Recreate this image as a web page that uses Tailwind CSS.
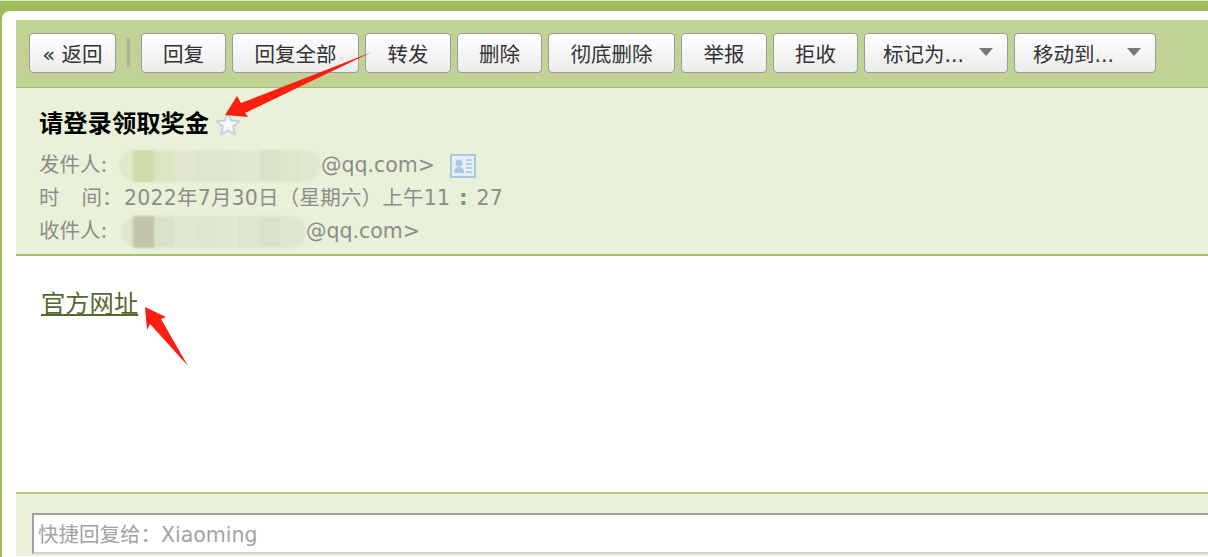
<!DOCTYPE html>
<html lang="zh-CN">
<head>
  <meta charset="UTF-8" />
  <title>请登录领取奖金</title>
  <script src="https://cdn.jsdelivr.net/npm/@tailwindcss/browser@4"></script>
</head>
<body class="relative h-[557px] w-[1208px] overflow-hidden bg-[#9dbc5b] font-['DejaVu_Sans','Noto_Sans_CJK_SC',sans-serif]">
  <div class="h-px bg-[#dfe8c8]"></div>

  <!-- Card -->
  <div class="ml-[2px] mt-[10px] h-[546px] rounded-tl-lg bg-white pl-[14px] pt-[9px]">

    <!-- Toolbar -->
    <div class="flex h-[68px] items-center border-b border-[#9fb96a] bg-[#c0d294] pb-[2px] pl-[13px]">
      <button class="h-[40px] w-[87px] rounded border border-[#9a9a9a] bg-gradient-to-b from-white to-[#ebebeb] pt-[6px] text-[20.5px] text-[#333]">« 返回</button>
      <div class="mx-[11px] h-[29px] w-[3px] bg-[#a9b59a]"></div>
      <div class="flex gap-[6px]">
        <button class="h-[40px] w-[85px] rounded border border-[#9a9a9a] bg-gradient-to-b from-white to-[#ebebeb] pt-[6px] text-[20.5px] text-[#333]">回复</button>
        <button class="h-[40px] w-[127px] rounded border border-[#9a9a9a] bg-gradient-to-b from-white to-[#ebebeb] pt-[6px] text-[20.5px] text-[#333]">回复全部</button>
        <button class="h-[40px] w-[86px] rounded border border-[#9a9a9a] bg-gradient-to-b from-white to-[#ebebeb] pt-[6px] text-[20.5px] text-[#333]">转发</button>
        <button class="h-[40px] w-[85px] rounded border border-[#9a9a9a] bg-gradient-to-b from-white to-[#ebebeb] pt-[6px] text-[20.5px] text-[#333]">删除</button>
        <button class="h-[40px] w-[127px] rounded border border-[#9a9a9a] bg-gradient-to-b from-white to-[#ebebeb] pt-[6px] text-[20.5px] text-[#333]">彻底删除</button>
        <button class="h-[40px] w-[86px] rounded border border-[#9a9a9a] bg-gradient-to-b from-white to-[#ebebeb] pt-[6px] text-[20.5px] text-[#333]">举报</button>
        <button class="h-[40px] w-[85px] rounded border border-[#9a9a9a] bg-gradient-to-b from-white to-[#ebebeb] pt-[6px] text-[20.5px] text-[#333]">拒收</button>
        <button class="flex h-[40px] w-[144px] items-center justify-between rounded border border-[#9a9a9a] bg-gradient-to-b from-white to-[#ebebeb] pl-[18px] pr-[14px] pt-[6px] text-[20.5px] text-[#333]">标记为...<span class="mb-[7px] h-0 w-0 border-x-[7px] border-t-[8px] border-x-transparent border-t-[#777]"></span></button>
        <button class="flex h-[40px] w-[142px] items-center justify-between rounded border border-[#9a9a9a] bg-gradient-to-b from-white to-[#ebebeb] pl-[18px] pr-[14px] pt-[6px] text-[20.5px] text-[#333]">移动到...<span class="mb-[7px] h-0 w-0 border-x-[7px] border-t-[8px] border-x-transparent border-t-[#777]"></span></button>
      </div>
    </div>

    <!-- Mail header -->
    <div class="h-[168px] border-b-2 border-[#a5bd6e] bg-[#e9f2d8] pl-[23px] pt-[20px] text-[20.5px] text-[#8c8c8c]">
      <div class="flex h-[32px] items-center">
        <h1 class="text-[24.3px] font-bold leading-none text-black">请登录领取奖金</h1>
        <svg class="ml-[6px]" width="26" height="26" viewBox="0 0 26 26"><path d="M13 2l3.3 7.4 8 .8-6 5.4 1.7 7.9-7-4-7 4 1.7-7.9-6-5.4 8-.8z" fill="#f6f7f6" stroke="#c8cedd" stroke-width="2" stroke-linejoin="round"/></svg>
      </div>
      <div class="mt-[9px] flex h-[33px] items-center">
        <span class="w-[80px]">发件人:</span>
        <span class="flex h-[32px] w-[202px] overflow-hidden rounded-[16px] blur-[1px]">
          <i class="w-[14px] bg-[#dfe8c9]"></i><i class="w-[21px] bg-[#cddcaa]"></i><i class="w-[21px] bg-[#dae6c2]"></i><i class="w-[21px] bg-[#e1e8cf]"></i><i class="w-[21px] bg-[#dde7cd]"></i><i class="w-[21px] bg-[#dfe7cf]"></i><i class="w-[21px] bg-[#e2e9d2]"></i><i class="w-[21px] bg-[#d9e2c9]"></i><i class="w-[21px] bg-[#dde6cb]"></i><i class="w-[20px] bg-[#e0e8cf]"></i>
        </span>
        <span>@qq.com&gt;</span>
        <svg class="ml-[15px]" width="26" height="24" viewBox="0 0 26 24"><rect x="1" y="1" width="24" height="22" fill="#e6eff5" stroke="#a9c8e4" stroke-width="2"/><circle cx="9" cy="9" r="3.5" fill="#a9c8e4"/><path d="M4 19c0-4 2-6 5-6s5 2 5 6z" fill="#a9c8e4"/><path d="M16 6h6M16 10h6M16 14h6M16 18h6" stroke="#a9c8e4" stroke-width="1.5"/></svg>
      </div>
      <div class="flex h-[33px] items-center">
        <span class="w-[85px]">时<span class="ml-[22px]">间：</span></span>
        <span class="tracking-[0.2px]">2022年7月30日（星期六）上午11<span class="mx-[9px] font-bold">:</span>27</span>
      </div>
      <div class="flex h-[33px] items-center">
        <span class="w-[82px]">收件人:</span>
        <span class="flex h-[32px] w-[185px] overflow-hidden rounded-[16px] blur-[1px]">
          <i class="w-[12px] bg-[#e0e6d0]"></i><i class="w-[21px] bg-[#c3c3ab]"></i><i class="w-[21px] bg-[#d9e2c9]"></i><i class="w-[21px] bg-[#e0e8cf]"></i><i class="w-[21px] bg-[#dfe6d0]"></i><i class="w-[21px] bg-[#e2e9d2]"></i><i class="w-[21px] bg-[#dde5cc]"></i><i class="w-[21px] bg-[#d9e2c9]"></i><i class="w-[26px] bg-[#dfe7cf]"></i>
        </span>
        <span>@qq.com&gt;</span>
      </div>
    </div>

    <!-- Mail body -->
    <div class="h-[236px] pl-[25px] pt-[33px]">
      <a href="#" class="text-[24.3px] leading-[30px] text-[#56682f] underline underline-offset-2">官方网址</a>
    </div>

    <!-- Quick reply -->
    <div class="h-[64px] border-t-2 border-[#b5c98a] bg-[#e9f2d8] pl-[16px] pt-[19px]">
      <input class="h-[41px] w-[1300px] border-2 border-[#a0a0a0] border-r-[#ccc] border-b-[#d0d0d0] bg-white pl-[4px] pt-[2px] text-[20.5px] placeholder:text-[#a3a3a3]" placeholder="快捷回复给：Xiaoming" />
    </div>
  </div>

  <!-- Red annotation arrows -->
  <svg class="absolute left-0 top-0" width="1208" height="557" viewBox="0 0 1208 557">
    <polygon points="225,115 237,96 241,103 372,52 245,113 248,117" fill="#fb1f12"/>
    <polygon points="145,307 166,317 161,319 188,366 150,324 147,330" fill="#fb1f12"/>
  </svg>
</body>
</html>
